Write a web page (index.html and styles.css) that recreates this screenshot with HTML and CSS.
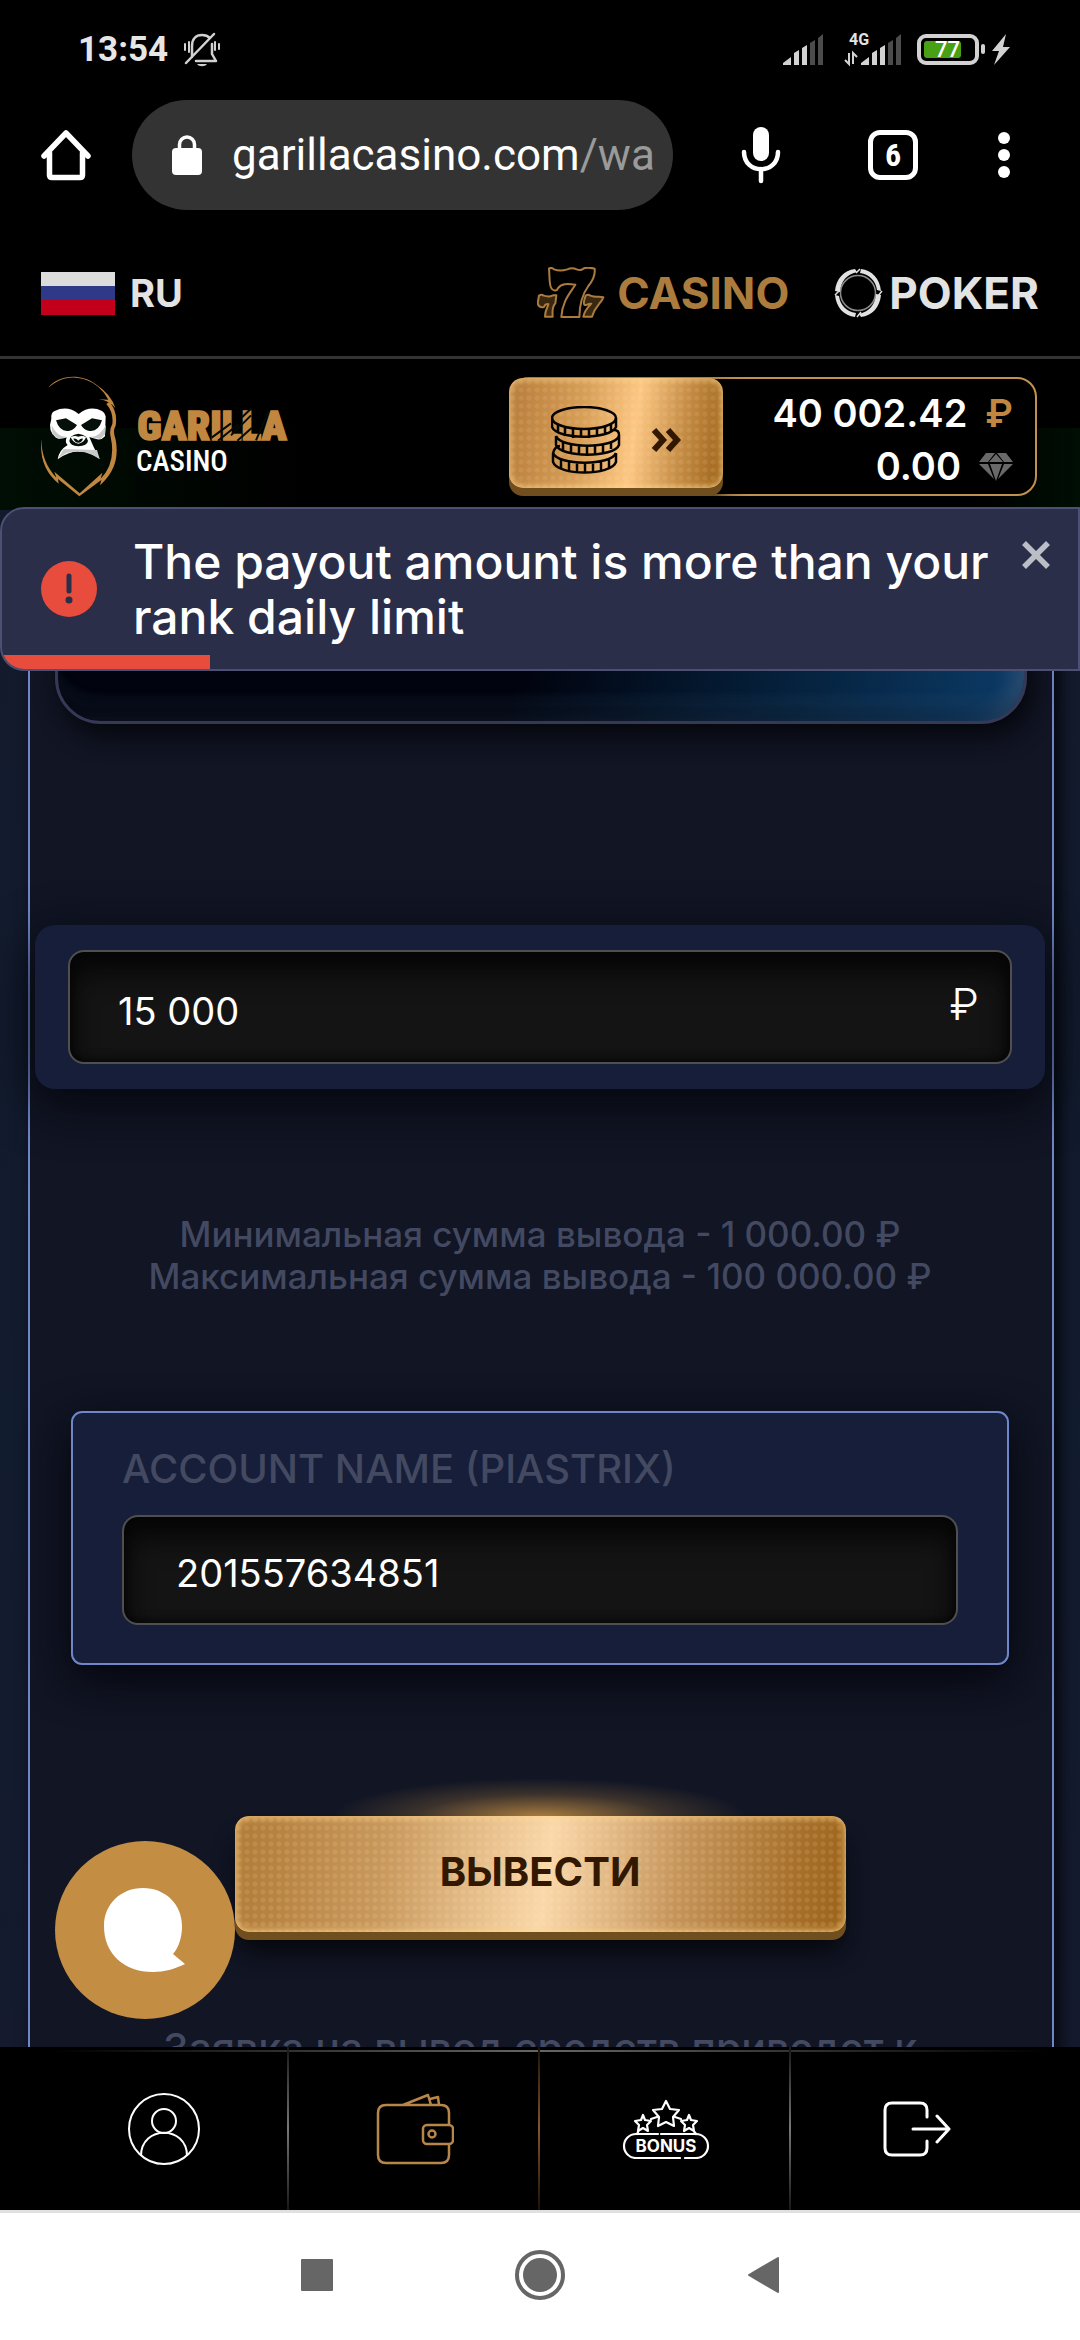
FILE: index.html
```html
<!DOCTYPE html>
<html lang="ru">
<head>
<meta charset="utf-8">
<meta name="viewport" content="width=device-width, initial-scale=1">
<title>Garilla Casino</title>
<link rel="stylesheet" href="styles.css">
</head>
<body>
<div class="status">
  <span class="status-time">13:54</span>
  <svg class="bell" width="36" height="36" viewBox="0 0 36 36" fill="none" stroke="#d2d2d2" stroke-width="2.5" stroke-linecap="round" stroke-linejoin="round">
    <path d="M8 25V14C8 7 12 3 18 3c3 0 6 1 8 3M28 12v10l4 7H12M2 31 30 2"/>
    <path d="M1 12v6M5 10v10M31 10v8M35 12v5" stroke-width="2"/>
    <path d="M13 32h10c-2 3-8 3-10 0z" fill="#d2d2d2" stroke="none"/>
  </svg>
  <svg class="signals" width="232" height="36" viewBox="0 0 232 36">
    <g fill="#d2d2d2"><path d="M1 33v-2l8-6v8zM12 33V21l5-3v15zM20 33V16l5-3v20z"/><path d="M79 33v-2l8-6v8zM90 33V21l5-3v15zM98 33V16l5-3v20z"/></g>
    <g fill="#4c4c4c"><path d="M28 33V11l5-3v25zM36 33V6l5-4v31z"/><path d="M106 33V11l5-3v25zM114 33V6l5-4v31z"/></g>
    <text x="67" y="13" class="tiny">4G</text>
    <path d="M67 21v11l-4-4M71 32V21l4 4" fill="none" stroke="#d2d2d2" stroke-width="2"/>
    <rect x="137" y="4" width="58" height="27" rx="7" fill="none" stroke="#d2d2d2" stroke-width="4"/>
    <rect x="142" y="9" width="37" height="17" rx="3" fill="#48a015"/>
    <rect x="199" y="12" width="4" height="10" rx="2" fill="#d2d2d2"/>
    <text x="153" y="25" class="battery-text">77</text>
    <path d="m224 2-14 17h7l-5 14 16-18h-7z" fill="#d2d2d2"/>
  </svg>
</div>

<div class="browser">
  <button class="plain" aria-label="Home">
    <svg width="50" height="52" viewBox="0 0 50 52" fill="none" stroke="#fff" stroke-width="5.5" stroke-linejoin="round" stroke-linecap="round"><path d="M3 27 25 4l22 23M8.500 24v22q0 2.500 2.500 2.500h28q2.500 0 2.500-2.500V24"/></svg>
  </button>
  <div class="address">
    <svg width="30" height="40" viewBox="0 0 30 40"><rect y="13" width="30" height="27" rx="4" fill="#fff"/><path d="M7.500 15V9.500a7.500 7.500 0 0 1 15 0V15" fill="none" stroke="#fff" stroke-width="3.500"/></svg>
    <span class="url">garillacasino.com<span class="path">/wa</span></span>
  </div>
  <div class="browser-actions">
    <button class="plain" aria-label="Voice search">
      <svg width="54" height="58" viewBox="-8 0 54 58"><rect x="11" y="1" width="16" height="34" rx="8" fill="#fff"/><path d="M2 26c0 23 34 23 34 0M19 43v12" fill="none" stroke="#fff" stroke-width="4.500" stroke-linecap="round"/></svg>
    </button>
    <button class="tabs">6</button>
    <button class="plain" aria-label="Menu">
      <svg width="12" height="46" viewBox="0 0 12 46" fill="#fff"><circle cx="6" cy="6" r="6"/><circle cx="6" cy="23" r="6"/><circle cx="6" cy="40" r="6"/></svg>
    </button>
  </div>
</div>

<header class="site">
  <nav class="modes">
    <button class="lang"><span class="flag"></span>RU</button>
    <a href="#" class="mode mode-casino">
      <svg width="68" height="52" viewBox="0 0 204 156" fill="none" stroke="#ac7c3f" stroke-width="6" stroke-linejoin="round">
        <path d="M36 5q7-5 15 2 18 7 40 0 14-6 28 0 12 5 20-2 10-6 34 0 3 25-19 52-26 36-27 93H73c3-48 25-70 42-97-25-3-42-4-53 12-2 8-15 8-20-3-6-12-4-40-6-57z"/>
        <path d="M6 86q8-5 14 0 16 5 28-1h10l-3 24c-12 13-8 27-8 40H24c0-22 10-30 10-38-12 0-9 3-13 9-10 2-17-2-19-12z" fill="#3a2710"/>
        <path d="M146 86q8-5 14 0 14 5 26 3l13 2c-6 18-24 24-34 58h-26c4-22 18-32 24-39-12-1-13 6-20 4-6-5-1-16 3-28z" fill="#3a2710"/>
      </svg>CASINO</a>
    <a href="#" class="mode mode-poker">
      <svg width="50" height="50" viewBox="0 0 50 50" fill="none" stroke="#e2e2e2">
        <circle cx="25" cy="25" r="17.500" stroke-width="1.500" stroke="#8a8a8a"/>
        <g fill="#e2e2e2" stroke="none"><path d="M2 23C3 11 11 2 22 1l2 3C13 7 8 13 7 24zM48 23C47 11 39 2 28 1l-1 4c10 1 16 9 17 17zM2 27c1 12 9 21 20 22l1-4C13 44 7 36 6 28zM48 27c-1 12-9 21-20 22l-2-3c11-3 16-9 17-20z"/></g>
        <path d="M23 5l4-4M24 49l4-5M2 27l4-4M45 28l4-5" stroke-width="1.500"/>
      </svg>POKER</a>
  </nav>
  <div class="account-row">
    <a href="#" class="logo" aria-label="Garilla Casino">
      <svg width="256" height="124" viewBox="33 24 768 372">
        <path d="M55 62C80 28 145 15 195 50q50 32 61 74-16-23-50-27l29 1q-24-44-64-58C125 22 88 33 55 62zM238 104q26 30 19 72-10 16 0 42 15 80-42 132l-5 5 4-16-66 49-64-52 2 14q-60-48-52-134 0 68 45 116l-6-18 76 65 68-62-5 18q47-48 30-125-5-22 5-39 4-35-18-60z" fill="#c18740"/>
        <path d="M64 155q-2-18 10-23 38-18 72 9 34-27 70-9 10 6 11 16l-2 60q-12 14-29 7l-18-5 13 30 18 36q-36-26-62-22-28-2-64 23 4-28 30-43-9-7-3-23-17 7-32 1-26-20-14-57z" fill="#fff"/>
        <path d="m78 160 30-6 33 20q-8 14-22 17-30 6-41-31zm138 0-30-6-33 20q8 14 22 17 30 6 41-31zM118 222q0-18 27-22 27 4 29 22-2 14-29 16-25-2-27-16z" fill="#06100a"/>
        <path d="M122 210q12-5 23-1 12-4 23 1-4 16-23 20-18-4-23-20z" fill="#fff"/><path d="M130 215q8-2 15 6 7-8 14-6-4 12-14 12t-15-12z" fill="#06100a"/>
        <path d="M64 174q18 38 49 36l-28 6-17-15zM228 174q-20 38-49 36l33 6 13-14zM85 273l16-27 100 3 8 27-23-13q-38-17-78-4z" fill="#c9c9c9"/>
        <text x="322" y="219" class="brand">GARILLA</text>
        <path d="m545 212 58-43M564 221l61-49M603 205l60-60M622 221l43-38M636 151l30-29M678 220l38-88" stroke="#050b06" stroke-width="6"/>
        <text x="318" y="311" class="brand-sub">CASINO</text>
      </svg>
    </a>
    <div class="balance">
      <button class="gold cashier" aria-label="Cashier">
        <svg width="70" height="68" viewBox="0 0 70 68" fill="none" stroke="#050300" stroke-width="2.500">
          <path d="M2 47v9c5 14 58 14 63 0v-9M2 47q2-7 7-7M65 47v7"/><path d="M2 47c5 13 58 13 63 0M10 53v9M18 56v9M26 57v9M34 57v9M42 57v9M50 56v9M58 53v9"/>
          <path d="M5 30v9c5 13 58 13 63 0V29q0-5-5-5M5 30c5 13 58 13 63 0M12 36v8M20 39v8M28 40v9M36 40v9M44 40v8M52 38v8M60 35v8"/>
          <ellipse cx="33" cy="12" rx="32" ry="11"/><path d="M1 12v9c5 13 58 13 64 0v-9M7 19v8M14 22v8M22 23v9M30 23v9M38 23v9M46 22v9M54 20v8M60 18v7"/>
        </svg>
        <svg width="30" height="24" viewBox="0 0 30 24" fill="none" stroke="#321800" stroke-width="6"><path d="m3 2 9 10-9 10M17 2l9 10-9 10"/></svg>
      </button>
      <div class="amounts">
        <div>40 002.42 <b>₽</b></div>
        <div>0.00 <svg width="34" height="28" viewBox="0 0 34 28" fill="#696969"><path d="M7 0h9L9 9H0zM18 0h9l7 9h-9zM17 1l7 8H10zM0 11h9l6 15zM34 11h-9l-6 15zM11 11h12l-6 17z"/></svg></div>
      </div>
    </div>
  </div>
  <div class="toast" role="alert">
    <svg width="56" height="56" viewBox="0 0 56 56"><circle cx="28" cy="28" r="28" fill="#e74c3c"/><path d="M28 15v15" stroke="#2b2e48" stroke-width="5" stroke-linecap="round"/><circle cx="28" cy="39" r="3.500" fill="#2b2e48"/></svg>
    <p>The payout amount is more than your rank daily limit</p>
    <button class="plain" aria-label="Close"><svg width="28" height="28" viewBox="0 0 28 28" stroke="#bcbec6" stroke-width="5.500"><path d="m2 2 24 24M26 2 2 26"/></svg></button>
    <span class="toast-progress"></span>
  </div>
</header>

<main>
  <form class="panel">
    <div class="method"></div>
    <div class="amount">
      <input type="text" value="15 000" aria-label="Сумма вывода">
      <span class="currency">₽</span>
    </div>
    <p class="limits">Минимальная сумма вывода - 1 000.00 ₽<br>Максимальная сумма вывода - 100 000.00 ₽</p>
    <div class="wallet">
      <label for="account">ACCOUNT NAME (PIASTRIX)</label>
      <input id="account" type="text" value="201557634851">
    </div>
    <div class="submit-row"><button type="button" class="gold submit">ВЫВЕСТИ</button></div>
    <p class="note">Заявка на вывод средств приведет к</p>
  </form>
  <button class="chat" aria-label="Chat"><svg width="82" height="84" viewBox="0 0 82 84" fill="#fff"><path d="M39 0c22 0 39 16 39 38 0 11-3 21-9 28l12 10c-10 5-21 8-32 8C20 84 0 66 0 38 0 16 17 0 39 0z"/></svg></button>
</main>

<nav class="tabbar">
  <a href="#" aria-label="Profile"><svg width="74" height="74" viewBox="0 0 74 74" fill="none" stroke="#fff" stroke-width="2"><circle cx="37" cy="37" r="35"/><circle cx="37" cy="29" r="12"/><path d="M14 64c0-31 46-31 46 0"/></svg></a>
  <a href="#" aria-label="Wallet"><svg width="78" height="72" viewBox="0 0 78 72" fill="none" stroke="#b9864a" stroke-width="2.500" stroke-linejoin="round"><path d="M73 32V20q0-8-8-8H10q-8 0-8 8v42q0 8 8 8h55q8 0 8-8V50M27 12 52 2l3 10M54 6l8-2 1 8"/><rect x="47" y="32" width="30" height="19" rx="4"/><circle cx="56" cy="41" r="3.500"/></svg></a>
  <a href="#" aria-label="Bonus"><svg width="88" height="60" viewBox="0 0 88 60" fill="none" stroke="#fff" stroke-width="2.200" stroke-linejoin="round" stroke-linecap="round">
    <path d="m44 2 4 8 9 1-6 7 1 9-8-4-8 4 1-9-6-7 9-1zM21 16l2 5 6 1-4 4 1 6-5-3-5 3 1-6-4-4 6-1zM67 16l2 5 6 1-4 4 1 6-5-3-5 3 1-6-4-4 6-1zM29 20l6-2M53 18l6 2M17 31l-2 4M71 31l3 4"/>
    <path d="M36 35H14a12 12 0 0 0 0 24h44M63 59h11a12 12 0 0 0 0-24H39"/><text x="44" y="53" class="bonus">BONUS</text></svg></a>
  <a href="#" aria-label="Logout"><svg width="68" height="56" viewBox="0 0 68 56" fill="none" stroke="#fff" stroke-width="3" stroke-linecap="round" stroke-linejoin="round"><path d="M44 16V9q0-7-7-7H9Q2 2 2 9v38q0 7 7 7h28q7 0 7-7v-7M30 28h36M54 15l12 13-12 13"/></svg></a>
</nav>
<div class="system-nav">
  <svg width="32" height="32" viewBox="0 0 32 32"><rect width="32" height="32" rx="1" fill="#666"/></svg>
  <svg width="50" height="50" viewBox="0 0 50 50"><circle cx="25" cy="25" r="23" fill="none" stroke="#666" stroke-width="4"/><circle cx="25" cy="25" r="17" fill="#666"/></svg>
  <svg width="32" height="38" viewBox="0 0 32 38"><path d="M31 2v34L2 19z" fill="#666" stroke="#666" stroke-width="2" stroke-linejoin="round"/></svg>
</div>
</body>
</html>
```
FILE: styles.css
```css
* { box-sizing: border-box; }
body {
  margin: 0;
  height: 100vh;
  display: flex;
  flex-direction: column;
  background: #000;
  color: #fff;
  font-family: Inter, "Liberation Sans", sans-serif;
  overflow: hidden;
}
button { font: inherit; border: 0; cursor: pointer; }
a { color: inherit; text-decoration: none; }
p { margin: 0; }
svg { display: block; flex: none; }
.plain { background: none; padding: 0; }

/* Phone status bar */
.status {
  height: 100px;
  flex: none;
  display: flex;
  align-items: center;
  padding: 0 66px 0 78px;
  gap: 16px;
}
.status-time { font: 700 35px/40px Roboto, sans-serif; color: #e6e6e6; }
.signals { margin-left: auto; }
.tiny { font: 700 16px Roboto, sans-serif; fill: #e2e2e2; }
.battery-text { font: 500 22px Roboto, sans-serif; fill: #fff; }

/* Browser toolbar */
.browser {
  height: 110px;
  flex: none;
  display: flex;
  align-items: center;
  padding: 0 70px 0 41px;
  gap: 41px;
}
.address {
  flex: 1;
  height: 110px;
  border-radius: 55px;
  background: #333;
  display: flex;
  align-items: center;
  gap: 30px;
  padding: 0 20px 0 40px;
  min-width: 0;
}
.url { font: 400 44px/56px Roboto, sans-serif; white-space: nowrap; overflow: hidden; min-width: 0; }
.path { color: #9a9a9a; }
.browser-actions { display: flex; align-items: center; gap: 80px; padding-left: 20px; }
.tabs {
  width: 50px;
  height: 50px;
  padding: 0;
  border: 5px solid #fff;
  border-radius: 12px;
  background: none;
  color: #fff;
  font: 700 32px/40px "Roboto Condensed", Roboto, sans-serif;
}

/* Site header */
.site {
  position: relative;
  flex: none;
  background: linear-gradient(90deg, #000e04, #000 28%, #000 90%, #000e04) 0 218px / 100% 100px no-repeat #000;
}
.modes {
  height: 149px;
  display: flex;
  align-items: center;
  padding: 20px 41px 0;
  border-bottom: 3px solid #333;
  color: #e3e3e3;
  font-weight: 700;
}
.lang {
  display: flex;
  align-items: center;
  gap: 15px;
  margin-right: auto;
  padding: 0;
  background: none;
  color: inherit;
  font-size: 38px;
  font-weight: 700;
}
.flag { width: 74px; height: 43px; background: linear-gradient(#dcdcdc 33%, #2e3a87 33% 66%, #c3001b 66%); }
.mode { display: flex; align-items: center; font-size: 44px; }
.mode-casino { color: #ac7c3f; gap: 12px; margin-right: 44px; }
.mode-poker { gap: 6px; }
.account-row {
  height: 151px;
  display: flex;
  align-items: center;
  justify-content: space-between;
  padding: 4px 43px 0 41px;
}
.brand { font: 900 124px "Roboto Condensed", "Liberation Sans Narrow", "Liberation Sans", sans-serif; fill: #c18740; stroke: #c18740; stroke-width: 5px; }
.brand-sub { font: 500 87px "Roboto Condensed", "Liberation Sans Narrow", "Liberation Sans", sans-serif; fill: #fff; }
.balance {
  width: 528px;
  height: 119px;
  display: flex;
  border: 2px solid #c1914f;
  border-radius: 20px;
  background: #000;
}
.gold {
  color: #321800;
  border-radius: 14px;
  box-shadow: 0 8px 0 #714e1e, inset 0 0 8px #ffd68e, 0 12px 24px #000;
  background:
    radial-gradient(circle, rgba(255, 238, 200, .12) 2px, transparent 3px) 0 0 / 8px 8px,
    linear-gradient(98deg, #b17a36, #c9995d 25%, #fbd8aa 51%, #c6955b 72%, #a8712c 90%, #9c6218);
}
.cashier {
  width: 214px;
  margin: -1px 0 6px -2px;
  display: flex;
  align-items: center;
  justify-content: center;
  gap: 30px;
  padding: 14px 0 0;
  background:
    radial-gradient(circle, rgba(255, 238, 200, .1) 2px, transparent 3px) 0 0 / 8px 8px,
    linear-gradient(98deg, #b67b39, #d89f58 35%, #fdc783 58%, #c48b44 80%, #9c6218);
}
.amounts {
  flex: 1;
  display: flex;
  flex-direction: column;
  padding: 8px 22px 0 0;
  font-size: 38px;
  font-weight: 600;
  line-height: 53px;
}
.amounts div { display: flex; justify-content: flex-end; align-items: center; gap: 18px; }
.amounts b { color: #c18740; font-weight: 600; }

/* Error message laid over the page */
.toast {
  position: absolute;
  z-index: 2;
  top: 297px;
  left: 0;
  right: 0;
  height: 164px;
  display: flex;
  align-items: center;
  gap: 36px;
  padding: 0 28px 0 39px;
  border: 2px solid #4b5074;
  border-radius: 24px 0 0 24px;
  background: #2b2e48;
  overflow: hidden;
}
.toast p { flex: 1; margin-right: -36px; font-size: 48px; font-weight: 500; line-height: 55px; }
.toast button { align-self: flex-start; margin-top: 32px; }
.toast-progress { position: absolute; left: 0; bottom: 0; width: 208px; height: 14px; background: #e74c3c; }

/* Withdrawal form */
main {
  position: relative;
  flex: 1;
  min-height: 0;
  overflow: hidden;
  padding: 0 26px 0 28px;
  background: linear-gradient(#131a2c, #121c2f 60%, #151a2e);
}
.panel {
  min-height: 100%;
  border: solid #6f86c8;
  border-width: 0 2px;
  padding: 0 7px 0 5px;
  background: #111524;
  box-shadow: 6px 0 14px #05070c;
  text-align: center;
}
.method {
  height: 214px;
  margin: 0 18px 201px 20px;
  border: 3px solid #353955;
  border-radius: 0 0 46px 46px;
  background: linear-gradient(110deg, #01030e 50%, #062340 78%, #0c3c68);
  box-shadow: inset 0 -18px 14px -8px rgba(0, 3, 12, .2), inset 0 -30px 6px -4px rgba(60, 80, 110, .12), inset -20px 0 20px -8px rgba(90, 110, 140, .4), 6px 12px 24px #06070d;
}
input {
  width: 100%;
  border: 2px solid #4f4f4f;
  border-radius: 16px;
  background: #141414;
  box-shadow: inset 0 20px 28px #060606, inset 0 0 12px #000;
  color: #fff;
  font: 400 38px Inter, "Liberation Sans", sans-serif;
}
.amount {
  position: relative;
  padding: 25px 33px;
  border-radius: 20px;
  background: #171e39;
  box-shadow: 0 14px 50px #04060c;
}
.amount input { display: block; height: 114px; padding: 8px 100px 0 48px; }
.currency { position: absolute; right: 66px; top: 54px; font-size: 44px; font-weight: 300; line-height: 50px; }
.limits {
  margin: 124px 0 114px;
  color: #434961;
  font-size: 35px;
  font-weight: 500;
  line-height: 42px;
}
.wallet {
  margin: 0 36px 111px;
  height: 254px;
  padding: 28px 49px;
  border: 2px solid #6f86c8;
  border-radius: 11px;
  background: #171e39;
  box-shadow: 0 14px 44px #04060c;
  text-align: left;
}
.wallet label { display: block; margin-bottom: 18px; color: #434961; font-size: 40px; font-weight: 500; line-height: 56px; }
.wallet input { height: 110px; padding: 6px 52px 0; }
.submit-row {
  padding-top: 40px;
  background: radial-gradient(ellipse 210px 40px at 50% 42px, rgba(227, 164, 74, .75), rgba(227, 164, 74, .2) 60%, transparent);
}
.submit {
  display: block;
  width: 611px;
  max-width: 90%;
  height: 116px;
  margin: 0 auto;
  padding: 0 0 6px;
  font-size: 40px;
  font-weight: 700;
  box-shadow: 0 8px 0 #714e1e, inset 0 0 10px #ffd68e, 0 22px 24px -4px #05060a;
}
.note { margin-top: 95px; color: #434961; font-size: 41px; font-weight: 500; line-height: 42px; }
.chat {
  position: absolute;
  left: 55px;
  bottom: 28px;
  width: 180px;
  height: 178px;
  border-radius: 50%;
  display: grid;
  place-items: center;
  padding: 0;
  background: #c48d44;
}

/* Bottom navigation */
.tabbar {
  flex: none;
  height: 163px;
  display: grid;
  grid-template-columns: 1fr 1fr 1fr 1fr;
  padding: 0 38px;
  background: linear-gradient(90deg, #000 5%, #666 50%, #000 97%) 0 3px / 100% 2px no-repeat #000;
}
.tabbar a {
  display: grid;
  place-items: center;
  background: linear-gradient(#181818, #777 50%, #181818) right / 2px 100% no-repeat;
}
.tabbar a:nth-child(2) { background-image: linear-gradient(#1b120a, #81552d 50%, #1b120a); }
.tabbar a:last-child { background: none; }
.bonus { font: 700 17px Inter, sans-serif; fill: #fff; stroke: none; text-anchor: middle; }
.system-nav {
  flex: none;
  height: 130px;
  display: flex;
  align-items: center;
  justify-content: center;
  gap: 182px;
  padding-bottom: 3px;
  border-top: 3px solid #e0e0e0;
  background: #fff;
}
```
